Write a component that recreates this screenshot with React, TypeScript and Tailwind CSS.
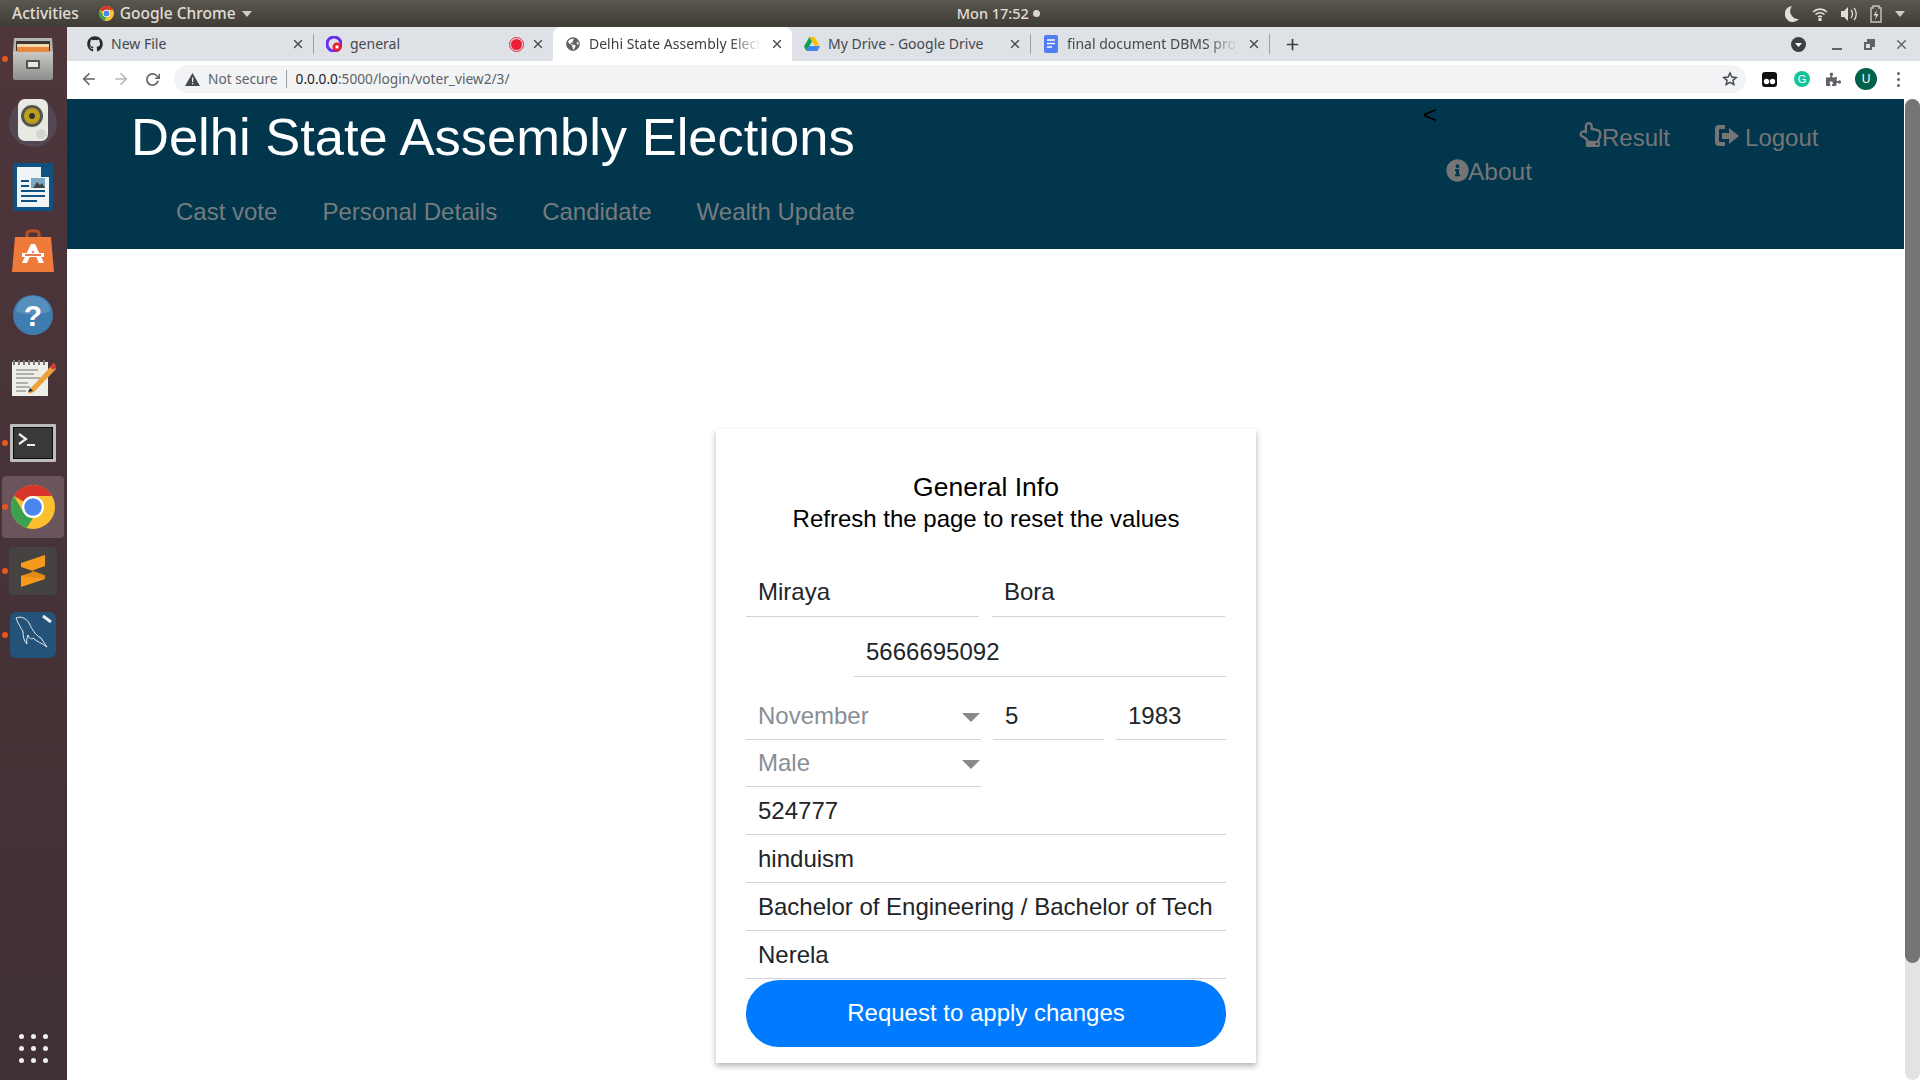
import React from "react";
import { FaGithub, FaRegHandPointUp, FaInfoCircle, FaPuzzlePiece, FaGlobeAmericas } from "react-icons/fa";
import { FiArrowLeft, FiArrowRight, FiRotateCw, FiX, FiPlus } from "react-icons/fi";

const IconFiles = () => (
  <svg width="44" height="46" viewBox="0 0 44 46">
    <defs>
      <linearGradient id="fg" x1="0" y1="0" x2="0" y2="1"><stop offset="0" stopColor="#c8c8c6" /><stop offset="1" stopColor="#8e8e8c" /></linearGradient>
    </defs>
    <path d="M3 2h38l1 14H2z" fill="#b5b5b3" />
    <rect x="5" y="5" width="34" height="10" fill="#3a3530" />
    <rect x="6" y="8" width="32" height="3" fill="#f2d8a8" />
    <rect x="6" y="11" width="32" height="6" fill="#e8883a" />
    <path d="M2 16h40v26a2 2 0 0 1-2 2H4a2 2 0 0 1-2-2z" fill="url(#fg)" />
    <rect x="15" y="24" width="14" height="9" rx="1" fill="#55554f" />
    <rect x="17" y="26" width="10" height="5" fill="#e6e6e6" />
  </svg>
);
const IconSound = () => (
  <svg width="50" height="50" viewBox="0 0 50 50">
    <circle cx="25" cy="25" r="24" fill="#5f6f8a" opacity="0.3" />
    <rect x="10" y="1" width="30" height="42" rx="7" fill="#e9e9e4" />
    <circle cx="24" cy="18" r="11" fill="#55554c" />
    <circle cx="24" cy="18" r="8" fill="#bda11c" />
    <circle cx="24" cy="18" r="3" fill="#333" />
    <circle cx="33" cy="36" r="5" fill="#d4d4cf" />
  </svg>
);
const IconWriter = () => (
  <svg width="40" height="48" viewBox="0 0 40 48">
    <path d="M2 0h26l12 12v34a2 2 0 0 1-2 2H2a2 2 0 0 1-2-2V2a2 2 0 0 1 2-2z" fill="#0d5484" />
    <path d="M4 4h24v10h8v30H4z" fill="#f1f4f6" />
    <path d="M29 0h9a2 2 0 0 1 2 2v10z" fill="#0d5484" />
    <rect x="18" y="15" width="14" height="10" fill="#7ba6c4" />
    <path d="M20 25l4-6 3 3 2-2 3 5z" fill="#444" />
    <rect x="8" y="17" width="8" height="2" fill="#0d5484" />
    <rect x="8" y="22" width="8" height="2" fill="#0d5484" />
    <rect x="8" y="27" width="24" height="2" fill="#0d5484" />
    <rect x="8" y="32" width="24" height="2" fill="#0d5484" />
    <rect x="8" y="37" width="16" height="2" fill="#0d5484" />
  </svg>
);
const IconSoftware = () => (
  <svg width="42" height="44" viewBox="0 0 42 44">
    <path d="M15 10V5a3 3 0 0 1 3-3h6a3 3 0 0 1 3 3v5" fill="none" stroke="#b8502a" strokeWidth="3" />
    <path d="M3 8h36l3 35H0z" fill="#ee7a3c" />
    <path d="M19 15h4l9 19h-5l-6-13-6 13h-5z" fill="#fff" />
    <rect x="10" y="24" width="22" height="4" fill="#fff" />
    <rect x="13" y="25.2" width="16" height="1.6" fill="#e8562a" />
  </svg>
);
const IconHelp = () => (
  <svg width="40" height="40" viewBox="0 0 40 40">
    <circle cx="20" cy="20" r="20" fill="#3f7cb0" />
    <path d="M3 16a17 15 0 0 1 34 0c-8 5-26 5-34 0z" fill="#6ea0cc" opacity="0.5" />
    <text x="20" y="31" textAnchor="middle" fontFamily="Liberation Sans" fontWeight="700" fontSize="30" fill="#fff">?</text>
  </svg>
);
const IconEdit = () => (
  <svg width="46" height="40" viewBox="0 0 46 40">
    <rect x="2" y="3" width="36" height="34" fill="#efefea" />
    <path d="M4 1v5M9 1v5M14 1v5M19 1v5M24 1v5M29 1v5M34 1v5" stroke="#777" strokeWidth="2" />
    <path d="M6 11h22M6 15h18M6 19h24M6 24h12M6 28h14M6 32h10" stroke="#9a9a9a" strokeWidth="1.3" />
    <path d="M20 30l22-24 4 4-22 23-6 2z" fill="#efa23c" />
    <path d="M40 8l3-4c2 0 3 2 3 4l-3 3z" fill="#d03a3a" />
    <path d="M18 33l2-4 3 3z" fill="#222" />
  </svg>
);
const IconTerminal = () => (
  <svg width="46" height="38" viewBox="0 0 46 38">
    <rect width="46" height="38" rx="1" fill="#bdbdbb" />
    <rect x="3" y="3" width="40" height="32" fill="#0c0c0c" />
    <rect x="4" y="4" width="38" height="30" fill="#3a3a3a" />
    <path d="M9 10l7 5-7 5" fill="none" stroke="#eee" strokeWidth="2.2" />
    <rect x="17" y="20" width="8" height="2" fill="#eee" />
  </svg>
);
const IconChrome = ({ size = 44 }: { size?: number }) => (
  <svg width={size} height={size} viewBox="0 0 48 48">
    <circle cx="24" cy="24" r="24" fill="#fbc02d" />
    <path d="M24 0a24 24 0 0 1 20.8 12H24a12 12 0 0 0-10.4 6L3.2 12A24 24 0 0 1 24 0z" fill="#d8362a" />
    <path d="M3.2 12l10.4 18A12 12 0 0 0 24 36l-6.9 11A24 24 0 0 1 3.2 12z" fill="#3ba150" />
    <circle cx="24" cy="24" r="12" fill="#fff" />
    <circle cx="24" cy="24" r="9.5" fill="#4a86ee" />
  </svg>
);
const IconSublime = () => (
  <svg width="48" height="48" viewBox="0 0 48 48">
    <rect width="48" height="48" rx="4" fill="#444341" />
    <path d="M12 16L36 8v11l-14 5 14 4.5V32L12 40V29l14-4.5L12 20z" fill="#f79a1c" />
    <path d="M26 24.5L36 28.5V32l-24-3z" fill="#e08a18" />
  </svg>
);
const IconMysql = () => (
  <svg width="46" height="46" viewBox="0 0 46 46">
    <rect width="46" height="46" rx="6" fill="#245279" />
    <path d="M6 6c5-2 10 0 13 5 3 6 6 12 12 15l6 9c-5-4-10-5-14-9-2 2-4 0-5-3-1 4-2 6-1 9-3-3-4-7-4-12-1-3-4-6-7-14z" fill="none" stroke="#e8eef2" strokeWidth="1" />
    <path d="M33 4l8 6" stroke="#e8eef2" strokeWidth="3" />
  </svg>
);

const dock = [
  { icon: <IconFiles />, dot: true },
  { icon: <IconSound /> },
  { icon: <IconWriter /> },
  { icon: <IconSoftware /> },
  { icon: <IconHelp /> },
  { icon: <IconEdit /> },
  { icon: <IconTerminal />, dot: true },
  { icon: <IconChrome />, dot: true, active: true },
  { icon: <IconSublime />, dot: true },
  { icon: <IconMysql />, dot: true },
];

const IconDrive = () => (
  <svg width="16" height="15" viewBox="0 0 16 15">
    <path d="M5.5 0h5l5 8.5h-5z" fill="#fbbc04" />
    <path d="M5.5 0L0 9.5 2.5 14 8 4.5z" fill="#0f9d58" />
    <path d="M2.5 14h11l2.5-5H5z" fill="#4285f4" />
  </svg>
);
const IconDocs = () => (
  <svg width="14" height="18" viewBox="0 0 14 18">
    <rect width="14" height="18" rx="2" fill="#4f7df3" />
    <path d="M3 5h8M3 8.5h8M3 12h5" stroke="#fff" strokeWidth="1.6" />
  </svg>
);
const IconGeneral = () => (
  <svg width="16" height="16" viewBox="0 0 16 16">
    <circle cx="8" cy="8" r="7" fill="none" stroke="#6a2cf0" strokeWidth="3" />
    <circle cx="11" cy="11" r="4.5" fill="#ee1c2e" />
    <rect x="9.5" y="9.5" width="3" height="3" fill="#fff" />
  </svg>
);

const tabs = [
  { title: "New File", icon: <FaGithub size={16} color="#26292e" /> },
  { title: "general", icon: <IconGeneral />, rec: true },
  { title: "Delhi State Assembly Elections", icon: <FaGlobeAmericas size={14} color="#5f6368" />, active: true, fade: true },
  { title: "My Drive - Google Drive", icon: <IconDrive /> },
  { title: "final document DBMS project", icon: <IconDocs />, fade: true },
];

function Tab({ t, showSep }: { t: any; showSep: boolean }) {
  return (
    <div className={`flex h-[34px] w-[239px] shrink-0 items-center pl-[12px] pr-[8px] ${t.active ? "rounded-t-[8px] bg-white" : ""}`}>
      <div className="flex w-[16px] shrink-0 justify-center">{t.icon}</div>
      <div className={`mb-[2px] ml-[8px] mr-[3px] flex-1 overflow-hidden whitespace-nowrap text-[14px] ${t.fade ? "[mask-image:linear-gradient(to_right,black_82%,transparent)]" : ""} ${t.active ? "text-[#3c4043]" : "text-[#45494e]"}`}>{t.title}</div>
      {t.rec && (
        <div className="mr-[3px] h-[11px] w-[11px] rounded-full bg-[#ea1f35] outline outline-1 outline-offset-1 outline-[#ea1f35]" />
      )}
      <FiX size={14} strokeWidth={2.4} color="#45494e" className="ml-[6px] shrink-0" />
      {showSep && <div className="ml-[8px] mr-[-8px] h-[20px] w-px shrink-0 bg-[#9aa0a6]" />}
    </div>
  );
}

function UnderInput({ value, className = "" }: { value: string; className?: string }) {
  return (
    <input
      readOnly
      value={value}
      className={`block h-[48px] border-b border-[#ced4da] bg-transparent px-[12px] text-[24px] text-[#212529] outline-none ${className}`}
    />
  );
}

function UnderSelect({ value, className = "" }: { value: string; className?: string }) {
  return (
    <div className={`flex items-center justify-between border-b border-[#ced4da] pl-[12px] text-[24px] text-[#868e96] ${className}`}>
      <span>{value}</span>
      <svg width="18" height="9" viewBox="0 0 18 9" className="mr-[1px] mt-[3px]"><path d="M0 0h18L9 9z" fill="#8a8a8a" /></svg>
    </div>
  );
}

export default function App() {
  return (
    <div className="flex h-screen w-full flex-col overflow-hidden bg-white font-['Liberation_Sans',Arial,sans-serif]">
      <div className="flex h-[27px] shrink-0 items-center justify-between bg-gradient-to-b from-[#5a574f] to-[#3f3c36] font-['Noto_Sans',sans-serif] text-[14.5px] font-medium text-[#e2ded6]">
        <div className="flex items-center text-[15.5px]">
          <span className="ml-[12px]">Activities</span>
          <span className="ml-[20px]"><IconChrome size={15} /></span>
          <span className="ml-[6px]">Google Chrome</span>
          <svg width="10" height="6" viewBox="0 0 10 6" className="ml-[6px]"><path d="M0 0h10L5 6z" fill="#d0ccc4" /></svg>
        </div>
        <div className="ml-[-40px] flex items-center gap-[4px]">
          <span>Mon 17:52</span>
          <span className="h-[7px] w-[7px] rounded-full bg-[#d8d6d0]" />
        </div>
        <div className="mr-[15px] flex items-center gap-[13px]">
          <svg width="14" height="16" viewBox="0 0 14 16"><path d="M7 0a8 8 0 1 0 7 13A8 8 0 0 1 7 0z" fill="#e2ded6" /></svg>
          <svg width="16" height="14" viewBox="0 0 16 14" fill="none" stroke="#e2ded6" strokeWidth="1.6"><path d="M1 5a10 10 0 0 1 14 0M3.5 7.5a6.5 6.5 0 0 1 9 0M6 10a3 3 0 0 1 4 0" /><circle cx="8" cy="12.5" r="1" fill="#e2ded6" /></svg>
          <svg width="16" height="14" viewBox="0 0 16 14"><path d="M0 4h3l4-4v14l-4-4H0z" fill="#e2ded6" /><path d="M10 3c2 2 2 6 0 8M13 1c3 3 3 9 0 12" fill="none" stroke="#e2ded6" strokeWidth="1.3" /></svg>
          <svg width="12" height="18" viewBox="0 0 12 18"><path d="M3 1h6v2h2v14H1V3h2z" fill="none" stroke="#c9c5bd" strokeWidth="1.4" /><path d="M7 5L3.5 10.5H6L5 15l3.5-6H6z" fill="#e2ded6" /></svg>
          <svg width="10" height="6" viewBox="0 0 10 6"><path d="M0 0h10L5 6z" fill="#d0ccc4" /></svg>
        </div>
      </div>

      <div className="flex min-h-0 flex-1">
        <div className="flex w-[67px] shrink-0 flex-col items-center justify-between bg-gradient-to-b from-[#4e363b] to-[#3f3033] pb-[17px] pr-[1px]">
          <div className="flex w-full flex-col">
            {dock.map((d, i) => (
              <div key={i} className="relative flex h-[64px] items-center justify-center">
                {d.active && <div className="absolute inset-x-[2px] inset-y-[1px] rounded-[4px] bg-[#6b545b]" />}
                {d.dot && <div className="absolute left-[2px] top-[29px] h-[6px] w-[6px] rounded-full bg-[#e95420]" />}
                <div className="relative flex">{d.icon}</div>
              </div>
            ))}
          </div>
          <div className="grid grid-cols-3 gap-[7px]">
            {Array.from({ length: 9 }).map((_, i) => (
              <div key={i} className="h-[5px] w-[5px] rounded-full bg-[#eeeeee]" />
            ))}
          </div>
        </div>

        <div className="flex min-w-0 flex-1 flex-col">
          <div className="flex h-[34px] shrink-0 items-center bg-[#dee1e6] pl-[8px] font-['Noto_Sans',sans-serif]">
            {tabs.map((t, i) => (
              <Tab key={i} t={t} showSep={i === 0 || i === 3 || i === 4} />
            ))}
            <FiPlus size={17} strokeWidth={2.4} color="#3c4043" className="ml-[14px]" />
            <div className="ml-auto mr-[11px] flex items-center">
              <svg width="15" height="15" viewBox="0 0 15 15"><circle cx="7.5" cy="7.5" r="7.5" fill="#3c4043" /><path d="M4 6h7l-3.5 4z" fill="#fff" /></svg>
              <div className="ml-[26px] mt-[10px] h-[2px] w-[10px] bg-[#5f6368]" />
              <svg width="11" height="11" viewBox="0 0 11 11" className="ml-[22px]"><path d="M3 0h8v8H8v3H0V3h3z" fill="#5f6368" /><rect x="2" y="5" width="4" height="4" fill="#dee1e6" /></svg>
              <FiX size={15} strokeWidth={2.2} color="#5f6368" className="ml-[19px]" />
            </div>
          </div>

          <div className="flex h-[38px] shrink-0 items-center bg-white pb-[2px]">
            <FiArrowLeft size={18} strokeWidth={2.2} color="#5f6368" className="ml-[13px]" />
            <FiArrowRight size={18} strokeWidth={2.2} color="#b4b7bb" className="ml-[14px]" />
            <FiRotateCw size={15} strokeWidth={2.6} color="#5f6368" className="ml-[15px]" />
            <div className="ml-[14px] flex h-[28px] w-[1572px] items-center rounded-full bg-[#f1f3f4] pl-[11px] pr-[8px] font-['Noto_Sans',sans-serif] text-[13.7px]">
              <svg width="15" height="13" viewBox="0 0 15 13"><path d="M7.5 0L15 13H0z" fill="#45494e" /><rect x="7" y="4.5" width="1.2" height="4.5" fill="#f1f3f4" /><rect x="7" y="10" width="1.2" height="1.3" fill="#f1f3f4" /></svg>
              <span className="ml-[8px] text-[#5f6368]">Not secure</span>
              <span className="ml-[8px] mr-[9px] h-[18px] w-px bg-[#9aa0a6]" />
              <span className="text-[#202124]">0.0.0.0</span>
              <span className="text-[#5f6368]">:5000/login/voter_view2/3/</span>
              <svg width="16" height="16" viewBox="0 0 24 24" className="ml-auto" fill="none" stroke="#45494e" strokeWidth="2.2"><path d="M12 3l2.8 6 6.5.7-4.9 4.3 1.4 6.4L12 17l-5.8 3.4 1.4-6.4-4.9-4.3 6.5-.7z" /></svg>
            </div>
            <div className="ml-[16px] flex items-center">
              <svg width="15" height="15" viewBox="0 0 15 15"><rect width="15" height="15" rx="3" fill="#111" /><circle cx="4.5" cy="9.5" r="2.7" fill="#fff" /><circle cx="10.5" cy="9.5" r="2.7" fill="#fff" /></svg>
              <div className="ml-[17px] flex h-[16px] w-[16px] items-center justify-center rounded-full bg-[#15c39a] text-[11px] text-white">G</div>
              <FaPuzzlePiece size={15} color="#5f6368" className="ml-[16px]" />
              <div className="ml-[14px] flex h-[22px] w-[22px] items-center justify-center rounded-full bg-[#01614a] text-[12px] text-white">U</div>
              <div className="ml-[20px] flex flex-col gap-[3px]">
                <span className="h-[3px] w-[3px] rounded-full bg-[#5f6368]" />
                <span className="h-[3px] w-[3px] rounded-full bg-[#5f6368]" />
                <span className="h-[3px] w-[3px] rounded-full bg-[#5f6368]" />
              </div>
            </div>
          </div>

          <div className="flex min-h-0 flex-1">
            <div className="min-w-0 flex-1">
              <div className="flex h-[150px] justify-between bg-[#01364c]">
                <div className="pl-[64px]">
                  <div className="pt-[5px] text-[52.5px] leading-[65px] text-white">Delhi State Assembly Elections</div>
                  <div className="mt-[25px] flex gap-[45px] pl-[45px] text-[24px] leading-[36px] text-[#767b7d]">
                    <span>Cast vote</span>
                    <span>Personal Details</span>
                    <span>Candidate</span>
                    <span>Wealth Update</span>
                  </div>
                </div>
                <div className="w-[484px] pl-[3px] text-[24px] text-[#757575]">
                  <div className="h-[18px] text-[24px] leading-[31px] text-black">&lt;</div>
                  <div className="flex h-[36px] items-center pl-[155px] pt-[6px]">
                    <FaRegHandPointUp size={25} className="mt-[-8px]" />
                    <span className="ml-[-1px]">Result</span>
                    <svg width="26" height="26" viewBox="0 0 26 26" className="ml-[44px] mt-[-4px]" fill="#757575"><path d="M11 2H5a4 4 0 0 0-4 4v13a4 4 0 0 0 4 4h6v-4H6a1 1 0 0 1-1-1V7a1 1 0 0 1 1-1h5z" /><path d="M15 5l10 8-10 8v-5H8v-6h7z" /></svg>
                    <span className="ml-[5px]">Logout</span>
                  </div>
                  <div className="mt-[1px] flex items-center pl-[23px] text-[24.5px]">
                    <FaInfoCircle size={23} className="mt-[-4px]" />
                    <span className="ml-[-1px]">About</span>
                  </div>
                </div>
              </div>

              <div className="flex justify-center pl-[1px] pt-[180px]">
                <div className="flex h-[634px] w-[540px] flex-col px-[30px] pt-[42px] shadow-[0_3px_6px_rgba(0,0,0,0.3)]">
                  <div className="text-center text-[26.5px] leading-[32px] text-black">General Info</div>
                  <div className="text-center text-[24px] leading-[32px] text-black">Refresh the page to reset the values</div>
                  <div className="mt-[34px] flex gap-[13px]">
                    <UnderInput value="Miraya" className="w-[233px] pb-[2px]" />
                    <UnderInput value="Bora" className="w-[233px] pb-[2px]" />
                  </div>
                  <div className="mt-[12px] flex justify-end">
                    <UnderInput value="5666695092" className="w-[372px] pb-[2px]" />
                  </div>
                  <div className="mt-[15px] flex">
                    <UnderSelect value="November" className="h-[48px] w-[235px]" />
                    <UnderInput value="5" className="ml-[12px] w-[111px]" />
                    <UnderInput value="1983" className="ml-[12px] w-[110px]" />
                  </div>
                  <UnderSelect value="Male" className="h-[47px] w-[235px]" />
                  <UnderInput value="524777" className="w-[480px]" />
                  <UnderInput value="hinduism" className="w-[480px]" />
                  <UnderInput value="Bachelor of Engineering / Bachelor of Technology" className="w-[480px]" />
                  <UnderInput value="Nerela" className="w-[480px]" />
                  <button className="mt-[1px] h-[67px] w-[480px] rounded-[33px] bg-[#007bff] pb-[2px] text-[24px] text-white">Request to apply changes</button>
                </div>
              </div>
            </div>
            <div className="w-[16px] shrink-0 pl-[1px]">
              <div className="h-full rounded-full bg-[#e3e3e3]">
                <div className="h-[864px] rounded-full bg-[#757575]" />
              </div>
            </div>
          </div>
        </div>
      </div>
    </div>
  );
}
